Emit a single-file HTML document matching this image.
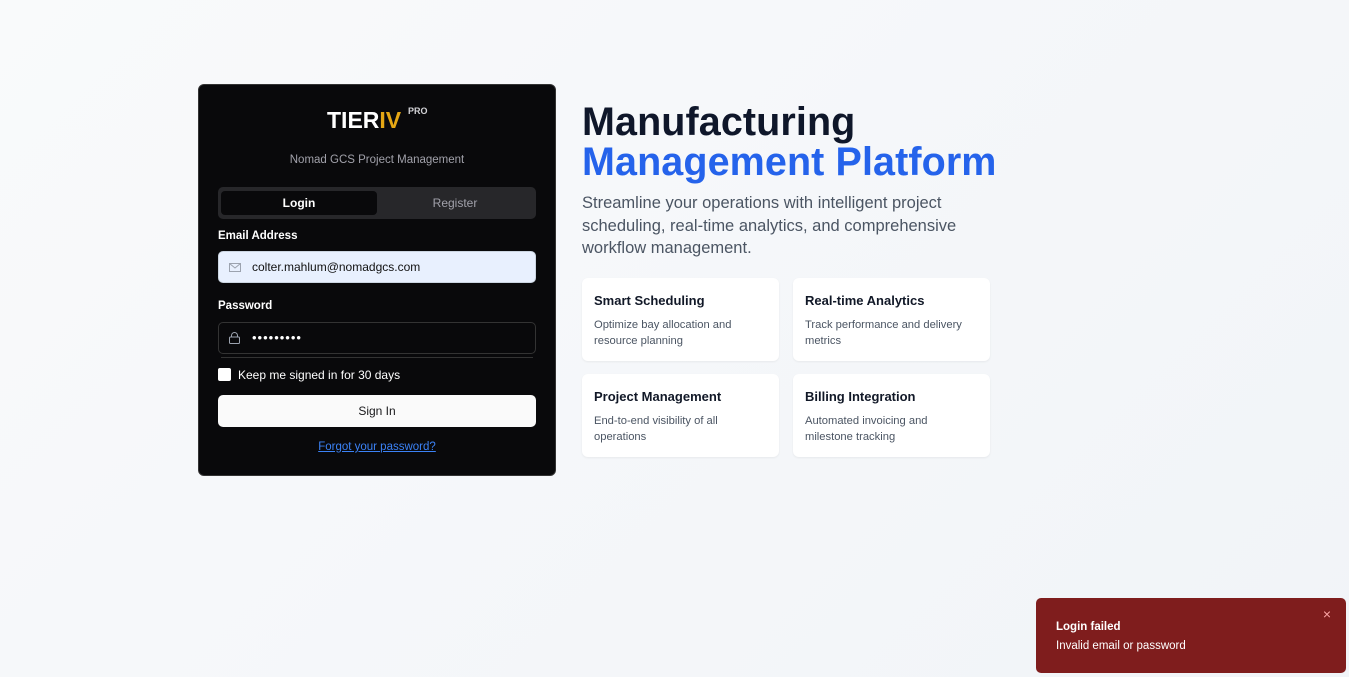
<!DOCTYPE html>
<html><head><meta charset="utf-8"><style>
*{box-sizing:border-box;margin:0;padding:0}
body{width:1349px;height:677px;overflow:hidden;background:linear-gradient(135deg,#f9fafb,#f1f4f8);font-family:"Liberation Sans",sans-serif;position:relative}
.card{position:absolute;left:198px;top:84px;width:358px;height:392px;background:#09090b;border:1px solid #333;border-radius:6px}
.logo{position:absolute;left:128px;top:22px;font-weight:bold;font-size:23px;color:#fff;letter-spacing:0px}
.logo span{color:#e5a714}
.logo sup{position:absolute;left:81px;top:-1px;font-size:9px;color:#d4d4d8}
.sub{position:absolute;top:69px;width:100%;text-align:center;color:#a1a1aa;font-size:11.5px}
.tabs{position:absolute;left:19px;top:102px;width:318px;height:32px;background:#27272a;border-radius:5px}
.tab{position:absolute;top:4px;height:24px;width:156px;border-radius:4px;text-align:center;line-height:24px;font-size:12px}
.lbl{position:absolute;left:19px;color:#fff;font-weight:bold;font-size:11.5px}
.inp{position:absolute;left:19px;width:318px;height:32px;border-radius:5px;font-size:12px;line-height:30px;padding-left:33px}
.btn{position:absolute;left:19px;top:310px;width:318px;height:32px;background:#fafafa;border-radius:5px;text-align:center;line-height:32px;font-size:12px;color:#18181b}
h1{position:absolute;left:582px;top:102px;font-size:39.5px;line-height:40px;color:#0f172a;font-weight:bold;letter-spacing:0.1px}
h1 span{color:#2563eb}
.lead{position:absolute;left:582px;top:192px;width:420px;font-size:16.5px;line-height:22.5px;color:#4b5563}
.f{position:absolute;width:197px;height:83px;background:#fff;border-radius:6px;box-shadow:0 1px 2px rgba(0,0,0,.06);padding:15px 22px 12px 12px}
.f b{display:block;font-size:13px;color:#111827;margin-bottom:9px}
.f p{font-size:11.2px;line-height:16px;color:#4b5563}
.toast{position:absolute;left:1036px;top:598px;width:310px;height:75px;background:#7f1d1d;border-radius:5px;color:#fff;padding:23px 20px;font-size:11.5px}
</style></head><body>
<div class="card">
<div class="logo">TIER<span>IV</span><sup>PRO</sup></div>
<div class="sub">Nomad GCS Project Management</div>
<div class="tabs"><div class="tab" style="left:3px;background:#09090b;color:#fff;font-weight:bold">Login</div><div class="tab" style="left:159px;color:#a1a1aa">Register</div></div>
<div class="lbl" style="top:145px">Email Address</div>
<div class="inp" style="top:166px;background:#e8f0fe;border:1px solid #cbd5e1;color:#111">colter.mahlum@nomadgcs.com
<svg style="position:absolute;left:10px;top:11px" width="12" height="9" viewBox="0 0 12 9"><rect x=".5" y=".5" width="11" height="8" fill="none" stroke="#9ca3af"/><path d="M.5 .5L6 5 11.5.5" fill="none" stroke="#9ca3af"/></svg></div>
<div class="lbl" style="top:215px">Password</div>
<div class="inp" style="top:237px;border:1px solid #333;color:#fff;letter-spacing:1px;font-size:13px">•••••••••
<svg style="position:absolute;left:10px;top:9px" width="11" height="12" viewBox="0 0 11 12"><rect x=".5" y="5" width="10" height="6.5" rx="1" fill="none" stroke="#9ca3af"/><path d="M2.5 5V3.5a3 3 0 016 0V5" fill="none" stroke="#9ca3af"/></svg></div>
<div style="position:absolute;left:22px;top:272px;width:312px;height:1px;background:#333"></div>
<div style="position:absolute;left:19px;top:283px;width:13px;height:13px;background:#fff;border-radius:2px"></div>
<div style="position:absolute;left:39px;top:283px;color:#fff;font-size:12px">Keep me signed in for 30 days</div>
<div class="btn">Sign In</div>
<div style="position:absolute;top:356px;width:100%;text-align:center;font-size:11.5px;color:#3b82f6;text-decoration:underline">Forgot your password?</div>
</div>
<h1>Manufacturing<br><span>Management Platform</span></h1>
<div class="lead">Streamline your operations with intelligent project scheduling, real-time analytics, and comprehensive workflow management.</div>
<div class="f" style="left:582px;top:278px"><b>Smart Scheduling</b><p>Optimize bay allocation and resource planning</p></div>
<div class="f" style="left:793px;top:278px"><b>Real-time Analytics</b><p>Track performance and delivery metrics</p></div>
<div class="f" style="left:582px;top:374px"><b>Project Management</b><p>End-to-end visibility of all operations</p></div>
<div class="f" style="left:793px;top:374px"><b>Billing Integration</b><p>Automated invoicing and milestone tracking</p></div>
<div class="toast"><b style="display:block;margin-bottom:7px">Login failed</b>Invalid email or password<span style="position:absolute;right:15px;top:8px;color:#fca5a5;font-size:14px">×</span></div>
</body></html>
